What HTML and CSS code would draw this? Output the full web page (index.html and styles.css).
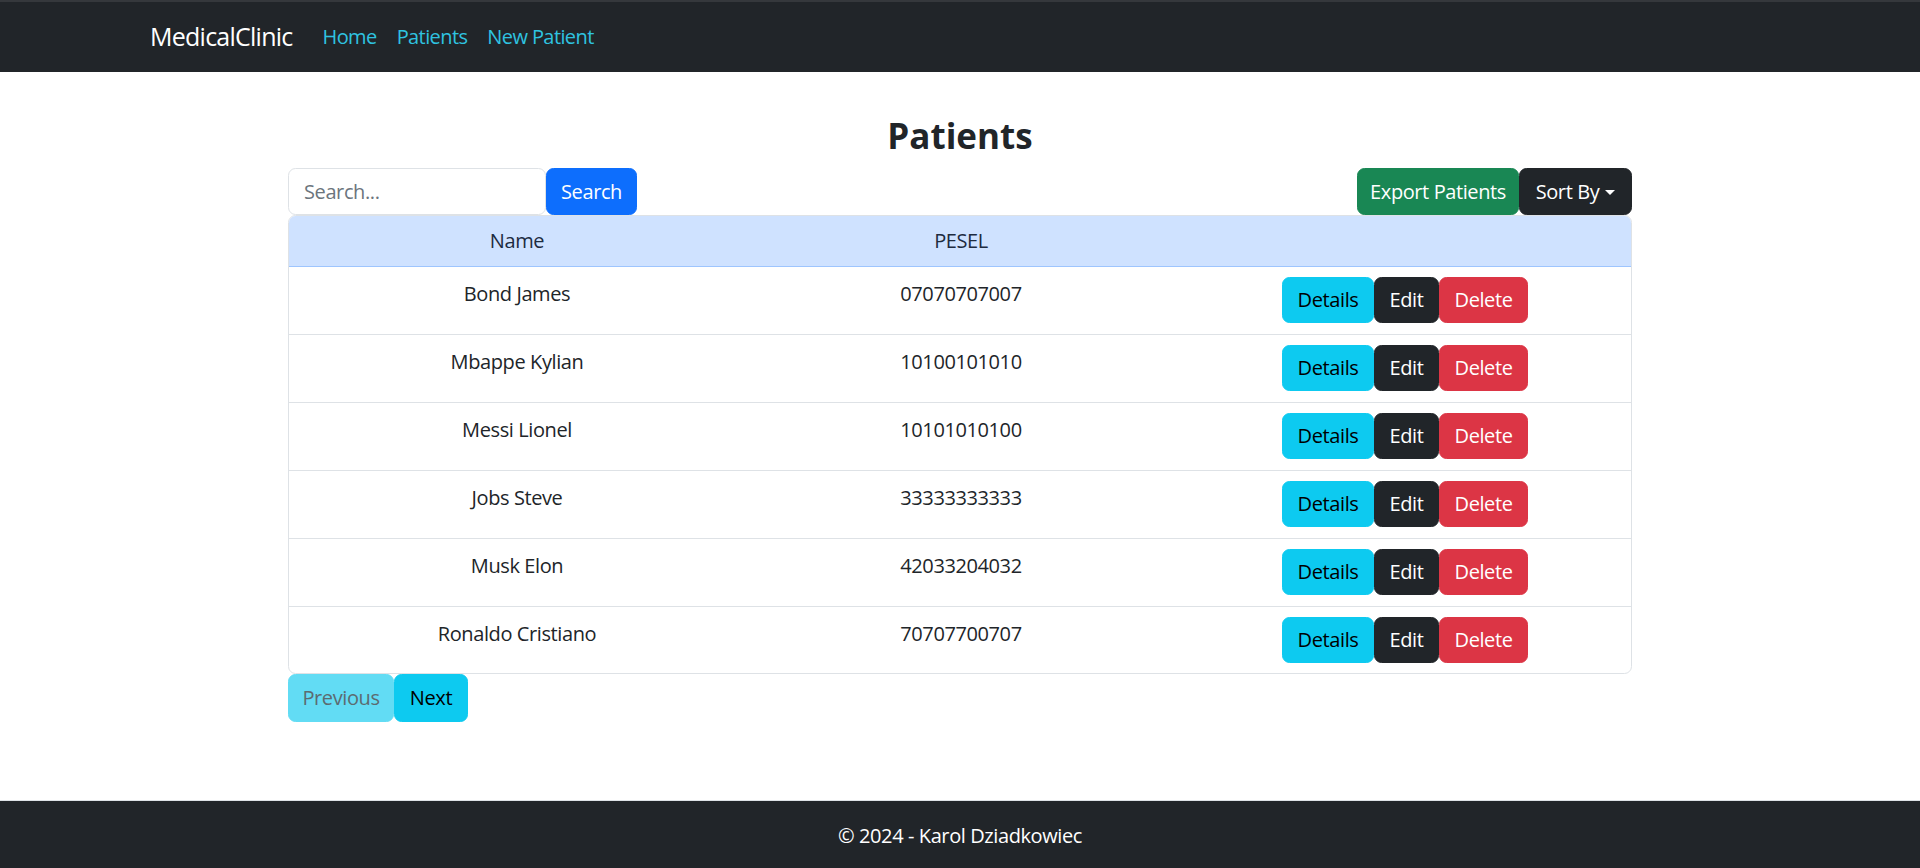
FILE: index.html
```html
<!DOCTYPE html>
<html lang="en">
<head>
<meta charset="utf-8">
<title>Patients - MedicalClinic</title>
<link rel="stylesheet" href="styles.css">
</head>
<body>
<div class="page">
  <header class="navbar">
    <div class="nav-inner">
      <a class="brand" href="#">MedicalClinic</a>
      <ul class="nav-links">
        <li><a href="#">Home</a></li>
        <li><a href="#">Patients</a></li>
        <li><a href="#">New Patient</a></li>
      </ul>
    </div>
  </header>

  <main class="content">
    <h3 class="title">Patients</h3>
    <div class="toolbar">
      <form class="search">
        <input class="search-input" type="text" placeholder="Search...">
        <button class="btn btn-primary btn-search" type="button">Search</button>
      </form>
      <div class="tools">
        <button class="btn btn-success btn-export" type="button">Export Patients</button>
        <button class="btn btn-dark btn-sort dropdown-toggle" type="button">Sort By</button>
      </div>
    </div>

    <div class="table-wrap">
      <table class="patients">
        <colgroup>
          <col class="col-name">
          <col class="col-pesel">
          <col class="col-actions">
        </colgroup>
        <thead>
          <tr><th>Name</th><th>PESEL</th><th></th></tr>
        </thead>
        <tbody>
          <tr><td>Bond James</td><td>07070707007</td><td class="actions"><button class="btn btn-info btn-details">Details</button><button class="btn btn-dark btn-edit">Edit</button><button class="btn btn-danger btn-delete">Delete</button></td></tr>
          <tr><td>Mbappe Kylian</td><td>10100101010</td><td class="actions"><button class="btn btn-info btn-details">Details</button><button class="btn btn-dark btn-edit">Edit</button><button class="btn btn-danger btn-delete">Delete</button></td></tr>
          <tr><td>Messi Lionel</td><td>10101010100</td><td class="actions"><button class="btn btn-info btn-details">Details</button><button class="btn btn-dark btn-edit">Edit</button><button class="btn btn-danger btn-delete">Delete</button></td></tr>
          <tr><td>Jobs Steve</td><td>33333333333</td><td class="actions"><button class="btn btn-info btn-details">Details</button><button class="btn btn-dark btn-edit">Edit</button><button class="btn btn-danger btn-delete">Delete</button></td></tr>
          <tr><td>Musk Elon</td><td>42033204032</td><td class="actions"><button class="btn btn-info btn-details">Details</button><button class="btn btn-dark btn-edit">Edit</button><button class="btn btn-danger btn-delete">Delete</button></td></tr>
          <tr><td>Ronaldo Cristiano</td><td>70707700707</td><td class="actions"><button class="btn btn-info btn-details">Details</button><button class="btn btn-dark btn-edit">Edit</button><button class="btn btn-danger btn-delete">Delete</button></td></tr>
        </tbody>
      </table>
    </div>

    <div class="pager">
      <button class="btn btn-info btn-prev" type="button" disabled>Previous</button>
      <button class="btn btn-info btn-next" type="button">Next</button>
    </div>
  </main>

  <footer class="footer">© 2024 - Karol Dziadkowiec</footer>
</div>
</body>
</html>
```

FILE: styles.css
```css
* { box-sizing: border-box; }

html, body {
  margin: 0;
  padding: 0;
}

body {
  font-family: "Open Sans", "Noto Sans", "Liberation Sans", sans-serif;
  font-size: 20px;
  line-height: 1.5;
  letter-spacing: -0.02em;
  color: #212529;
  background: #fff;
}

.page {
  min-height: 100vh;
  display: flex;
  flex-direction: column;
}

/* Navbar */
.navbar {
  background: #212529;
  border-top: 2px solid #35383c;
  height: 72px;
  display: flex;
  align-items: center;
}

.nav-inner {
  width: 1650px;
  margin: 0 auto;
  padding: 0 15px;
  display: flex;
  align-items: center;
}

.brand {
  color: #fff;
  text-decoration: none;
  font-size: 25px;
  line-height: 1.5;
  letter-spacing: -0.03em;
  margin-right: 20px;
}

.nav-links {
  list-style: none;
  margin: 0;
  padding: 0;
  display: flex;
}

.nav-links a {
  display: block;
  padding: 10px;
  color: #2fc3e0;
  text-decoration: none;
  font-size: 20px;
  letter-spacing: -0.03em;
}

/* Content */
.content {
  width: 1344px;
  margin: 0 auto;
  padding-top: 43px;
}

.title {
  margin: 0 0 11px;
  text-align: center;
  font-size: 35px;
  line-height: 42px;
  font-weight: 700;
  letter-spacing: 0;
  color: #212529;
}

.toolbar {
  display: flex;
  justify-content: space-between;
  align-items: stretch;
  height: 47px;
}

.search {
  display: flex;
  margin: 0;
}

.tools {
  display: flex;
}

.search-input {
  width: 258px;
  height: 47px;
  padding: 7px 15px;
  font: inherit;
  letter-spacing: inherit;
  color: #212529;
  border: 1px solid #dee2e6;
  border-radius: 7.5px;
  outline: none;
}

.search-input::placeholder {
  color: #6c757d;
}

.btn {
  display: inline-flex;
  align-items: center;
  justify-content: center;
  height: 47px;
  padding: 0 15px;
  font: inherit;
  font-size: 20px;
  letter-spacing: inherit;
  border: 1px solid transparent;
  border-radius: 7.5px;
  cursor: pointer;
  white-space: nowrap;
}

.btn-primary { background: #0d6efd; border-color: #0d6efd; color: #fff; }
.btn-success { background: #198754; border-color: #198754; color: #fff; }
.btn-dark { background: #212529; border-color: #212529; color: #fff; }
.btn-info { background: #0dcaf0; border-color: #0dcaf0; color: #000; }
.btn-danger { background: #dc3545; border-color: #dc3545; color: #fff; }

.btn-search { width: 91px; }
.btn-export { width: 162px; }
.btn-sort { width: 113px; }

.dropdown-toggle::after {
  content: "";
  display: inline-block;
  margin-left: 6px;
  margin-top: 1px;
  border-top: 5px solid;
  border-right: 5px solid transparent;
  border-left: 5px solid transparent;
}

/* Table */
.table-wrap {
  border: 1px solid #dee2e6;
  border-radius: 7.5px;
  overflow: hidden;
}

.patients {
  width: 100%;
  border-collapse: collapse;
  table-layout: fixed;
  text-align: center;
}

.col-name { width: 456px; }
.col-pesel { width: 432px; }
.col-actions { width: 456px; }

.patients th {
  background: #cfe2ff;
  color: #1d2b3f;
  font-weight: 400;
  height: 50px;
  padding: 0 10px;
  border-bottom: 1px solid #9ec5fe;
}

.patients td {
  height: 68px;
  padding: 12px 10px 0;
  vertical-align: top;
  border-bottom: 1px solid #dee2e6;
}

.patients tbody tr:last-child td {
  border-bottom: none;
  height: 67px;
}

.patients td.actions {
  padding-top: 10px;
}

.actions .btn {
  height: 46px;
  vertical-align: top;
}

.btn-details { width: 92px; }
.btn-edit { width: 65px; }
.btn-delete { width: 89px; }

/* Pager */
.pager {
  display: flex;
}

.btn-prev {
  width: 106px;
  height: 48px;
  background: #62dcf4;
  border-color: #62dcf4;
  color: #5c6b70;
  cursor: default;
}

.btn-next {
  width: 74px;
  height: 48px;
}

/* Footer */
.footer {
  margin-top: auto;
  height: 68px;
  padding-top: 3px;
  background: #212529;
  border-top: 1px solid #dee2e6;
  color: #fff;
  text-align: center;
  line-height: 64px;
  font-size: 20px;
}
```
